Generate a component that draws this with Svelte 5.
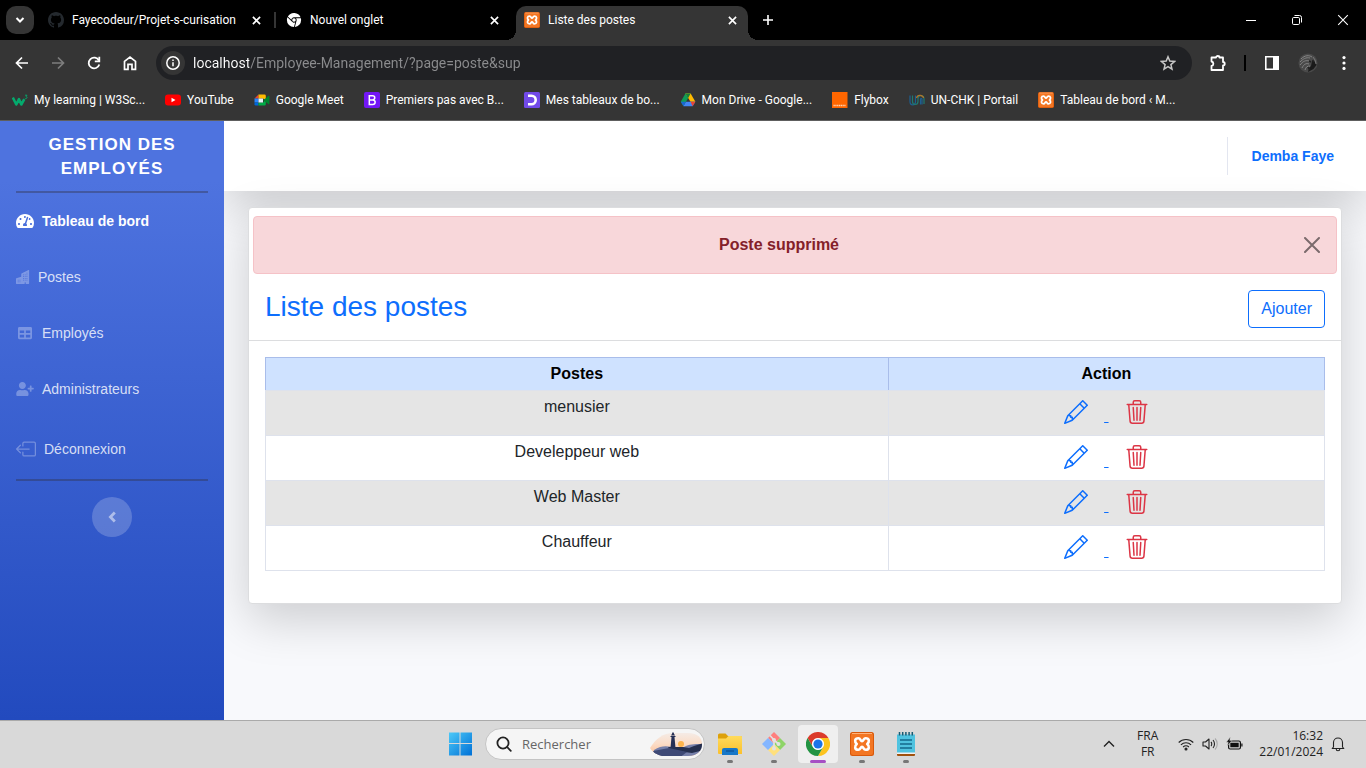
<script>
  const bookmarks = [
    { icon: 'w3', label: 'My learning | W3Sc...' },
    { icon: 'youtube', label: 'YouTube' },
    { icon: 'meet', label: 'Google Meet' },
    { icon: 'bootstrap', label: 'Premiers pas avec B...' },
    { icon: 'board', label: 'Mes tableaux de bo...' },
    { icon: 'drive', label: 'Mon Drive - Google...' },
    { icon: 'orange', label: 'Flybox' },
    { icon: 'un', label: 'UN-CHK | Portail' },
    { icon: 'xampp', label: 'Tableau de bord ‹ M...' }
  ];
  const tabs = [
    { icon: 'github', label: 'Fayecodeur/Projet-s-curisation', active: false },
    { icon: 'chromeMono', label: 'Nouvel onglet', active: false },
    { icon: 'xampp', label: 'Liste des postes', active: true }
  ];
  const nav = [
    { icon: 'gauge', label: 'Tableau de bord', active: true },
    { icon: 'buildings', label: 'Postes' },
    { icon: 'table', label: 'Employés' },
    { icon: 'userPlus', label: 'Administrateurs' },
    { icon: 'logout', label: 'Déconnexion', large: true }
  ];
  const apps = [
    { icon: 'folder', label: 'Explorateur de fichiers' },
    { icon: 'git', label: 'Git' },
    { icon: 'chrome', label: 'Google Chrome', active: true },
    { icon: 'xampp', label: 'XAMPP' },
    { icon: 'notepad', label: 'Bloc-notes' }
  ];
  const postes = ['menusier', 'Develeppeur web', 'Web Master', 'Chauffeur'];
  let url = $state('localhost/Employee-Management/?page=poste&sup');
  let query = $state('');
</script>

{#snippet icon(name, w, h = w)}
  {#if name === 'github'}
    <svg width={w} height={h} viewBox="0 0 16 16" fill="#24292e"><path d="M8 0C3.58 0 0 3.58 0 8c0 3.54 2.29 6.53 5.47 7.59.4.07.55-.17.55-.38 0-.19-.01-.82-.01-1.49-2.01.37-2.53-.49-2.69-.94-.09-.23-.48-.94-.82-1.13-.28-.15-.68-.52-.01-.53.63-.01 1.08.58 1.23.82.72 1.21 1.87.87 2.33.66.07-.52.28-.87.51-1.07-1.78-.2-3.64-.89-3.64-3.95 0-.87.31-1.59.82-2.15-.08-.2-.36-1.02.08-2.12 0 0 .67-.21 2.2.82.64-.18 1.32-.27 2-.27.68 0 1.36.09 2 .27 1.53-1.04 2.2-.82 2.2-.82.44 1.1.16 1.92.08 2.12.51.56.82 1.27.82 2.15 0 3.07-1.87 3.75-3.65 3.95.29.25.54.73.54 1.48 0 1.07-.01 1.93-.01 2.2 0 .21.15.46.55.38A8.013 8.013 0 0 0 16 8c0-4.42-3.58-8-8-8z" /></svg>
  {:else if name === 'chromeMono'}
    <svg width={w} height={h} viewBox="-1 -1 18 18" fill="#fff"><path d="M16 8a8 8 0 0 1-7.022 7.94l1.902-7.098a2.995 2.995 0 0 0 .05-1.492A2.977 2.977 0 0 0 10.237 6h5.511A8 8 0 0 1 16 8ZM0 8a8 8 0 0 0 7.927 8l1.426-5.321a2.978 2.978 0 0 1-.723.255 2.979 2.979 0 0 1-1.743-.147 2.986 2.986 0 0 1-1.043-.7L.633 4.876A7.975 7.975 0 0 0 0 8Zm5.004-.167L1.108 3.936A8.003 8.003 0 0 1 15.418 5H8.066a2.979 2.979 0 0 0-1.252.243 2.987 2.987 0 0 0-1.81 2.59ZM8 10a2 2 0 1 0 0-4 2 2 0 0 0 0 4Z" /></svg>
  {:else if name === 'xampp'}
    <svg width={w} height={h} viewBox="0 0 24 24"><rect width="24" height="24" rx="2.500" fill="#d9590b" /><rect x="1" y="1" width="22" height="22" rx="2" fill="#f37623" /><path d="M2 1.500h20" stroke="#ffb27a" stroke-width="1" /><path d="M8.400 6.200C4.500 6.200 4.300 10 6.800 12c-2.500 2-2.300 5.800 1.600 5.800 2.200 0 2-2.900 3.600-2.900s1.400 2.900 3.600 2.900c3.900 0 4.100-3.800 1.600-5.800 2.500-2 2.300-5.800-1.600-5.800-2.200 0-2 2.900-3.600 2.900S10.600 6.200 8.400 6.200z" fill="none" stroke="#fff" stroke-width="2.600" stroke-linejoin="round" /></svg>
  {:else if name === 'w3'}
    <svg width={w} height={h} viewBox="0 0 16 16" fill="none"><path d="M.8 5.500 4.300 12.500l2.700-5.300 2.300 5.300 3-5.300" stroke="#04aa6d" stroke-width="2.600" stroke-linejoin="round" /><path d="M13 3.200h2l-1 1.400c1.400 0 1.400 2-.2 2-.5 0-.8-.2-1-.5" stroke="#04aa6d" stroke-width=".9" /></svg>
  {:else if name === 'youtube'}
    <svg width={w} height={h} viewBox="0 0 16 16"><rect y="2.500" width="16" height="11" rx="3" fill="#f00" /><path d="m6.500 5.700 4 2.300-4 2.300z" fill="#fff" /></svg>
  {:else if name === 'meet'}
    <svg width={w} height={h} viewBox="0 0 16 16"><path d="M4.500 2.500v4h-4z" fill="#ea4335" /><path d="M.5 6.500h4v4h-4z" fill="#2684fc" /><path d="M.5 10.500h4v3H1.800A1.300 1.300 0 0 1 .5 12.200z" fill="#0066da" /><path d="M4.500 2.500h6A1.300 1.300 0 0 1 11.800 3.800V8L9 6.500H4.500z" fill="#ffba00" /><path d="M4.500 10.500H9L11.800 8v4.200a1.300 1.300 0 0 1-1.300 1.300h-6z" fill="#00ac47" /><path d="M4.500 6.500H9v4H4.500z" fill="#e9f1fb" /><path d="M11.800 6.200 14.500 3.800c.4-.3.900-.1.900.5v7.400c0 .6-.5.8-.9.5l-2.700-2.300L9 8z" fill="#00832d" /></svg>
  {:else if name === 'bootstrap'}
    <svg width={w} height={h} viewBox="0 0 16 16"><rect width="16" height="16" rx="2" fill="#7317f5" /><path d="M5.300 3.700h3.200c3 0 3 4 0 4.200H5.300zM5.300 7.900h3.600c3.100.2 3 4.500-.2 4.500H5.300z" fill="none" stroke="#fff" stroke-width="1.500" /></svg>
  {:else if name === 'board'}
    <svg width={w} height={h} viewBox="0 0 16 16"><rect width="16" height="16" rx="1.500" fill="#724ae8" /><path d="M4 3.800h3.500a4.200 4.200 0 0 1 0 8.400H4" fill="none" stroke="#fff" stroke-width="2.600" /></svg>
  {:else if name === 'drive'}
    <svg width={w} height={h} viewBox="0 0 16 16"><path d="M5.400 1.500h5.200L8 6.200 3.400 14.300.8 9.700z" fill="#0f9d58" /><path d="M5.400 1.500h5.200l4.800 8.200h-4.900z" fill="#ffba00" /><path d="M5.400 1.500 8 6.200l2.600-4.700z" fill="#188038" /><path d="M3.400 14.300h9.200l2.700-4.600H5.900z" fill="#4285f4" /><path d="M12.600 14.300 10.500 9.700h4.900z" fill="#ea4335" /><path d="M3.400 14.300.8 9.700h5.100z" fill="#1967d2" /></svg>
  {:else if name === 'orange'}
    <svg width={w} height={h} viewBox="0 0 16 16"><path d="M0 0h15.500v16H0z" fill="#ff6600" /><path d="M1.500 13.500h12" stroke="#ffd2b0" stroke-width="1.600" stroke-dasharray="1.300 .5" /></svg>
  {:else if name === 'un'}
    <svg width={w} height={h} viewBox="0 0 16 16" fill="none" stroke-width="1.200"><path d="M1 3.500v6c0 4.500 5.500 4.500 5.500 0v-6" stroke="#1d5f92" /><path d="M3.500 3.500v6c0 4 5.500 4 5.500 0V7c0-4.500 6-4.500 6 0v5" stroke="#1f7a70" /><path d="M7.500 6c1-4 6.500-3 7 0" stroke="#b0762c" /><path d="M11.500 12.500V7.500c0-1.500 1.500-1.500 1.500 0v5" stroke="#1d5f92" /></svg>
  {:else if name === 'gauge'}
    <svg width={w} height={h} viewBox="0 0 576 512" fill="currentColor"><path d="M288 32C128.940 32 0 160.940 0 320c0 52.800 14.250 102.260 39.060 144.800 5.610 9.620 16.300 15.200 27.440 15.200h443c11.140 0 21.830-5.580 27.440-15.200C561.750 422.260 576 372.800 576 320c0-159.060-128.940-288-288-288zm0 64c14.710 0 26.580 10.130 30.320 23.650-1.110 2.260-2.640 4.230-3.450 6.670l-9.220 27.670c-5.130 3.490-10.970 6.010-17.640 6.010-17.670 0-32-14.330-32-32S270.330 96 288 96zM96 384c-17.670 0-32-14.330-32-32s14.330-32 32-32 32 14.330 32 32-14.330 32-32 32zm48-160c-17.670 0-32-14.330-32-32s14.330-32 32-32 32 14.330 32 32-14.330 32-32 32zm246.770-72.410l-61.330 184C343.130 347.330 352 364.540 352 384c0 11.720-3.380 22.550-8.880 32H232.880c-5.500-9.450-8.880-20.280-8.880-32 0-33.940 26.500-61.430 59.900-63.590l61.340-184.010c4.170-12.560 17.730-19.450 30.360-15.170 12.570 4.190 19.350 17.790 15.170 30.360zm14.660 57.200l15.520-46.550c3.470-1.290 7.130-2.230 11.050-2.230 17.670 0 32 14.330 32 32s-14.330 32-32 32c-11.380-.01-20.890-6.280-26.570-15.220zM480 384c-17.670 0-32-14.330-32-32s14.330-32 32-32 32 14.330 32 32-14.330 32-32 32z" /></svg>
  {:else if name === 'buildings'}
    <svg width={w} height={h} viewBox="0 0 16 16" fill="currentColor"><path d="M15 .5a.5.5 0 0 0-.724-.447l-8 4A.5.5 0 0 0 6 4.500v3.140L.342 9.526A.5.5 0 0 0 0 10v5.500a.5.5 0 0 0 .5.5h9a.5.5 0 0 0 .5-.5V14h1v1.500a.5.5 0 0 0 .5.5h3a.5.5 0 0 0 .5-.5V.5ZM2 11h1v1H2v-1Zm2 0h1v1H4v-1Zm-1 2v1H2v-1h1Zm1 0h1v1H4v-1Zm9-10v1h-1V3h1ZM8 5h1v1H8V5Zm1 2v1H8V7h1ZM8 9h1v1H8V9Zm2 0h1v1h-1V9Zm-1 2v1H8v-1h1Zm1 0h1v1h-1v-1Zm3-2v1h-1V9h1Zm-1 2h1v1h-1v-1Zm-2-4h1v1h-1V7Zm3 0v1h-1V7h1Zm-2-2v1h-1V5h1Zm1 0h1v1h-1V5Z" /></svg>
  {:else if name === 'table'}
    <svg width={w} height={h} viewBox="0 0 512 512" fill="currentColor"><path d="M464 32H48C21.490 32 0 53.490 0 80v352c0 26.510 21.490 48 48 48h416c26.510 0 48-21.490 48-48V80c0-26.510-21.490-48-48-48zM224 416H64v-96h160v96zm0-160H64v-96h160v96zm224 160H288v-96h160v96zm0-160H288v-96h160v96z" /></svg>
  {:else if name === 'userPlus'}
    <svg width={w} height={h} viewBox="0 0 640 512" fill="currentColor"><path d="M624 208h-64v-64c0-8.800-7.200-16-16-16h-32c-8.800 0-16 7.200-16 16v64h-64c-8.800 0-16 7.200-16 16v32c0 8.800 7.200 16 16 16h64v64c0 8.800 7.200 16 16 16h32c8.800 0 16-7.200 16-16v-64h64c8.800 0 16-7.200 16-16v-32c0-8.800-7.200-16-16-16zm-400 48c70.700 0 128-57.300 128-128S294.700 0 224 0 96 57.300 96 128s57.300 128 128 128zm89.600 32h-16.700c-22.200 10.200-46.900 16-72.900 16s-50.600-5.800-72.900-16h-16.700C60.200 288 0 348.200 0 422.400V464c0 26.500 21.500 48 48 48h352c26.500 0 48-21.500 48-48v-41.600c0-74.200-60.200-134.400-134.400-134.400z" /></svg>
  {:else if name === 'logout'}
    <svg width={w} height={h} viewBox="0 0 16 16" fill="currentColor"><path d="M6 12.500a.5.5 0 0 0 .5.5h8a.5.5 0 0 0 .5-.5v-9a.5.5 0 0 0-.5-.5h-8a.5.5 0 0 0-.5.5v2a.5.5 0 0 1-1 0v-2A1.500 1.500 0 0 1 6.500 2h8A1.500 1.500 0 0 1 16 3.500v9a1.500 1.500 0 0 1-1.500 1.500h-8A1.500 1.500 0 0 1 5 12.500v-2a.5.5 0 0 1 1 0v2z" /><path d="M.146 8.354a.5.5 0 0 1 0-.708l3-3a.5.5 0 1 1 .708.708L1.707 7.500H10.500a.5.5 0 0 1 0 1H1.707l2.147 2.146a.5.5 0 0 1-.708.708l-3-3z" /></svg>
  {:else if name === 'pencil'}
    <svg width={w} height={h} viewBox="0 0 16 16" fill="currentColor"><path d="M12.146.146a.5.5 0 0 1 .708 0l3 3a.5.5 0 0 1 0 .708l-10 10a.5.5 0 0 1-.168.110l-5 2a.5.5 0 0 1-.65-.65l2-5a.5.5 0 0 1 .110-.168l10-10zM11.207 2.500 13.500 4.793 14.793 3.500 12.500 1.207 11.207 2.500zm1.586 3L10.500 3.207 4 9.707V10h.5a.5.5 0 0 1 .5.5v.5h.5a.5.5 0 0 1 .5.5v.5h.293l6.500-6.500zm-9.761 5.175-.106.106-1.528 3.821 3.821-1.528.106-.106A.5.5 0 0 1 5 12.500V12h-.5a.5.5 0 0 1-.5-.5V11h-.5a.5.5 0 0 1-.468-.325z" /></svg>
  {:else if name === 'trash'}
    <svg width={w} height={h} viewBox="0 0 16 16" fill="currentColor"><path d="M6.500 1h3a.5.5 0 0 1 .5.5v1H6v-1a.5.5 0 0 1 .5-.5ZM11 2.500v-1A1.500 1.500 0 0 0 9.500 0h-3A1.500 1.500 0 0 0 5 1.500v1H2.506a.58.58 0 0 0-.01 0H1.500a.5.5 0 0 0 0 1h.538l.853 10.660A2 2 0 0 0 4.885 16h6.230a2 2 0 0 0 1.994-1.840l.853-10.660h.538a.5.5 0 0 0 0-1h-.995a.59.59 0 0 0-.01 0H11Zm1.958 1-.846 10.580a1 1 0 0 1-.997.920h-6.230a1 1 0 0 1-.997-.920L3.042 3.500h9.916Zm-7.487 1a.5.5 0 0 1 .528.470l.5 8.500a.5.5 0 0 1-.998.060L5 5.030a.5.5 0 0 1 .470-.530Zm5.058 0a.5.5 0 0 1 .470.530l-.5 8.500a.5.5 0 1 1-.998-.060l.5-8.500a.5.5 0 0 1 .528-.470ZM8 4.500a.5.5 0 0 1 .5.5v8.500a.5.5 0 0 1-1 0V5a.5.5 0 0 1 .5-.5Z" /></svg>
  {:else if name === 'folder'}
    <svg width={w} height={h} viewBox="0 0 24 24"><path d="M0 3a1.500 1.500 0 0 1 1.500-1.500h6L10 4h12.500A1.500 1.500 0 0 1 24 5.500V12H0z" fill="#dda10c" /><path d="M0 6.500h8L10.500 4H23a1 1 0 0 1 1 1v17H1a1 1 0 0 1-1-1z" fill="url(#folderFill)" /><path d="M4 23v-5a2 2 0 0 1 2-2h12a2 2 0 0 1 2 2v5z" fill="#1778c8" /><path d="M8 19h8" stroke="#0f579c" stroke-width="1.400" /><defs><linearGradient id="folderFill" x2="0" y2="1"><stop stop-color="#ffdb5c" /><stop offset="1" stop-color="#fbc02d" /></linearGradient></defs></svg>
  {:else if name === 'git'}
    <svg width={w} height={h} viewBox="0 0 24 24"><path d="m12 0 6 6-6 6-6-6z" fill="#ff7f7d" /><path d="m18 6 6 6-6 6-6-6z" fill="#8ed467" /><path d="m12 12 6 6-6 6-6-6z" fill="#ffe07c" /><path d="m6 6 6 6-6 6-6-6z" fill="#84b6ff" /><path d="m8 3.500 4 4.500v8M12 8l4.500 4" fill="none" stroke="#e2e2e2" stroke-width="1.700" /><g fill="#e2e2e2"><circle cx="12" cy="8" r="2" /><circle cx="12" cy="16.500" r="2" /><circle cx="16.500" cy="12" r="2" /></g></svg>
  {:else if name === 'chrome'}
    <svg width={w} height={h} viewBox="0 0 24 24"><path d="M1.600 6A12 12 0 0 1 22.400 6H12a6 6 0 0 0-5.200 9z" fill="#db3b2b" /><path d="M22.400 6A12 12 0 0 1 12 24l5.200-9A6 6 0 0 0 12 6z" fill="#fcc31e" /><path d="M1.600 6A12 12 0 0 0 12 24l5.200-9A6 6 0 0 1 6.800 15z" fill="#229342" /><circle cx="12" cy="12" r="5.800" fill="#fff" /><circle cx="12" cy="12" r="4.600" fill="#1a73e8" /></svg>
  {:else if name === 'notepad'}
    <svg width={w} height={h} viewBox="0 0 24 24"><path d="M3 21.500h18V23a1 1 0 0 1-1 1H4a1 1 0 0 1-1-1z" fill="#a0520f" /><path d="M3 20h18v2H3z" fill="#f2f2f2" /><path d="M3 2.500h18v18H3z" fill="#4fc3e0" /><path d="M6 8h12M6 12h12M6 16h12" stroke="#146a8c" stroke-width="1.500" /><path d="M5.500 0v3.500M8.700 0v3.500M11.900 0v3.500M15.100 0v3.500M18.300 0v3.500" stroke="#185a72" stroke-width="1.500" /></svg>
  {/if}
{/snippet}

{#snippet cross(size, width)}
  <svg width={size} height={size} viewBox="0 0 10 10" fill="none" stroke="currentColor" stroke-width={width}><path d="m1 1 8 8M9 1 1 9" /></svg>
{/snippet}

<div class="screen">
  <header class="browser">
    <div class="tabstrip">
      <button class="tab-search" aria-label="Rechercher dans les onglets"><svg width="12" height="12" viewBox="0 0 12 12" fill="none" stroke="#fff" stroke-width="2"><path d="m2.500 4 3.500 3.500L9.500 4" /></svg></button>
      <div class="tabs">
        {#each tabs as tab, i}
          <div class="tab" class:active={tab.active} class:divided={i === 0}>
            {@render icon(tab.icon, 16)}
            <span class="tab-title">{tab.label}</span>
            <button class="tab-close" aria-label="Fermer l'onglet">{@render cross(9, 1.8)}</button>
          </div>
        {/each}
      </div>
      <button class="new-tab" aria-label="Ouvrir un onglet"><svg width="12" height="12" viewBox="0 0 12 12" stroke="#fff" stroke-width="1.600"><path d="M6 1v10M1 6h10" /></svg></button>
      <div class="window-controls">
        <button aria-label="Réduire"><svg width="10" height="10" viewBox="0 0 10 10" stroke="#fff"><path d="M0 5.500h10" /></svg></button>
        <button aria-label="Restaurer"><svg width="10" height="10" viewBox="0 0 10 10" fill="none" stroke="#fff"><rect x=".5" y="2.500" width="7" height="7" rx="1.200" /><path d="M2.500.5H7.500A2 2 0 0 1 9.500 2.500v5" /></svg></button>
        <button aria-label="Fermer">{@render cross(12, 0.9)}</button>
      </div>
    </div>

    <div class="toolbar">
      <button aria-label="Retour"><svg width="16" height="16" viewBox="0 0 16 16" fill="none" stroke="#fff" stroke-width="1.700"><path d="M14 8H3M8 2.500 2.500 8 8 13.500" /></svg></button>
      <button aria-label="Avancer"><svg width="16" height="16" viewBox="0 0 16 16" fill="none" stroke="#7d7d7d" stroke-width="1.700"><path d="M2 8h11M8 2.500 13.500 8 8 13.500" /></svg></button>
      <button aria-label="Actualiser"><svg width="16" height="16" viewBox="0 0 16 16" fill="none" stroke="#fff" stroke-width="1.800"><path d="M12.900 5.500A5.400 5.400 0 1 0 13.300 9.500" /><path d="M13.300 1.800v4.500H8.800" /></svg></button>
      <button aria-label="Accueil"><svg width="16" height="16" viewBox="0 0 16 16" fill="none" stroke="#fff" stroke-width="1.700"><path d="M2.500 6.300 8 2l5.500 4.300v8H10v-5H6v5H2.500z" /></svg></button>
      <div class="omnibox">
        <span class="site-info"><svg width="16" height="16" viewBox="0 0 16 16" fill="none" stroke="#fff" stroke-width="1.500"><circle cx="8" cy="8" r="6.200" /><path d="M8 7.300v4M8 4.500v1.500" /></svg></span>
        <input aria-label="Adresse" bind:value={url} spellcheck="false" />
        <button class="star" aria-label="Ajouter aux favoris"><svg width="16" height="16" viewBox="0 0 16 16" fill="none" stroke="#c7c7c7" stroke-width="1.500"><path d="m8 1.800 1.800 4.300 4.700.4-3.600 3.100 1.100 4.600L8 11.700l-4 2.500 1.100-4.600L1.500 6.500l4.700-.4z" /></svg></button>
      </div>
      <button aria-label="Extensions"><svg width="18" height="18" viewBox="0 0 18 18" fill="none" stroke="#fff" stroke-width="1.800" stroke-linejoin="round"><path d="M2.500 3.500H7c0-2 3.500-2 3.500 0H14V8c2.300 0 2.300 3.500 0 3.500V16H2.500v-4c2.500-.5 2.500-4 0-4.500z" /></svg></button>
      <span class="tool-divider"></span>
      <button aria-label="Panneau latéral"><svg width="16" height="16" viewBox="0 0 16 16"><path d="M1.800 1.800h12.400v12.400H1.800z" fill="none" stroke="#fff" stroke-width="1.600" /><path d="M9 2h5.500v12H9z" fill="#fff" /></svg></button>
      <button aria-label="Profil"><svg width="20" height="20" viewBox="0 0 20 20"><circle cx="10" cy="10" r="9.500" fill="#4a4a4a" /><path d="M3 6c4-4 8-4 11-2M2 9c3-3 6-5 10-4M2 12c3-4 6-5 9-4M4 15c2-4 4-5 7-4M7 17c1-3 2-4 5-4" fill="none" stroke="#858585" /><path d="M14 8c3 0 4 1 4.500 4l-3 4-5.500 3 1-4 2-2z" fill="#1a1a1a" /><path d="m14.500 7 1.500 2M11 8l2 1M10 14l2 3" stroke="#222" stroke-width="1.500" /><path d="m15 4 2 3 1 4" stroke="#777" fill="none" /></svg></button>
      <button aria-label="Menu"><svg width="16" height="16" viewBox="0 0 16 16" fill="#fff"><circle cx="8" cy="2.600" r="1.600" /><circle cx="8" cy="8" r="1.600" /><circle cx="8" cy="13.400" r="1.600" /></svg></button>
    </div>

    <nav class="bookmarks" aria-label="Favoris">
      {#each bookmarks as mark}
        <a href="#top">{@render icon(mark.icon, 16)}<span>{mark.label}</span></a>
      {/each}
    </nav>
  </header>

  <div class="page">
    <aside class="sidebar">
      <a class="brand" href="#top">Gestion des employés</a>
      <hr />
      <ul>
        {#each nav as item}
          <li>
            <a href="#top" class:active={item.active} class:large={item.large}>
              {#if item.icon === 'gauge'}
                <span class="nav-icon">{@render icon(item.icon, 18, 16)}</span>
              {:else if item.icon === 'userPlus'}
                <span class="nav-icon">{@render icon(item.icon, 18, 14)}</span>
              {:else if item.icon === 'logout'}
                <span class="nav-icon">{@render icon(item.icon, 20)}</span>
              {:else if item.icon === 'buildings'}
                <span class="nav-icon small">{@render icon(item.icon, 14)}</span>
              {:else}
                <span class="nav-icon">{@render icon(item.icon, 14)}</span>
              {/if}
              <span>{item.label}</span>
            </a>
          </li>
        {/each}
      </ul>
      <hr />
      <button class="collapse" aria-label="Réduire le menu"><svg width="8" height="12" viewBox="0 0 8 12" fill="none" stroke="currentColor" stroke-width="2.800"><path d="M6.800 1.500 2.400 6l4.400 4.500" /></svg></button>
    </aside>

    <div class="content">
      <div class="topbar"><a class="user" href="#top">Demba Faye</a></div>
      <main class="card">
        <div class="alert" role="alert">
          <strong>Poste supprimé</strong>
          <button class="dismiss" aria-label="Fermer"><svg width="16" height="16" viewBox="0 0 16 16" stroke="#000" stroke-width="2" stroke-linecap="round"><path d="m1 1 14 14M15 1 1 15" /></svg></button>
        </div>
        <div class="card-header">
          <h1>Liste des postes</h1>
          <button class="add">Ajouter</button>
        </div>
        <div class="card-body">
          <table>
            <thead><tr><th class="name">Postes</th><th>Action</th></tr></thead>
            <tbody>
              {#each postes as poste}
                <tr>
                  <td>{poste}</td>
                  <td>
                    <div class="actions">
                      <a class="edit" href="#top" aria-label="Modifier {poste}">{@render icon('pencil', 24)}<span>&nbsp;</span></a>
                      <a class="delete" href="#top" aria-label="Supprimer {poste}">{@render icon('trash', 24)}</a>
                    </div>
                  </td>
                </tr>
              {/each}
            </tbody>
          </table>
        </div>
      </main>
    </div>
  </div>

  <footer class="taskbar">
    <div class="dock">
      <button class="app" aria-label="Démarrer"><svg width="24" height="24" viewBox="0 0 24 24"><defs><linearGradient id="win" x2="1" y2="1"><stop stop-color="#4cc9f8" /><stop offset="1" stop-color="#0070d6" /></linearGradient></defs><path d="M1 .5h10.500V11H1zM12.500.5H24V11H12.500zM1 12h10.500v11.500H1zM12.500 12H24v11.500H12.500z" fill="url(#win)" /></svg></button>
      <div class="search">
        <svg width="16" height="16" viewBox="0 0 16 16" fill="none" stroke="#222" stroke-width="1.800" stroke-linecap="round"><circle cx="7" cy="7" r="5.600" /><path d="m11.200 11.200 3.600 3.600" /></svg>
        <input aria-label="Rechercher" placeholder="Rechercher" bind:value={query} />
        <svg width="54" height="28" viewBox="0 0 54 28"><defs><linearGradient id="sky" x2="0" y2="1"><stop stop-color="#f3efee" /><stop offset=".5" stop-color="#fbdcc6" /><stop offset="1" stop-color="#fbb98b" /></linearGradient><clipPath id="pill"><path d="M0 18C6 9 12 3 24 3h14c10 0 14 5 14 11s-4 12-14 12H12C8 25 3 23 0 18z" /></clipPath></defs><g clip-path="url(#pill)"><path d="M0 0h54v28H0z" fill="url(#sky)" /><circle cx="31" cy="14" r="3" fill="#fcb34c" /><path d="M4 20c8-5 14-4 22-2l8-1c6-3 10-3 20-3v15H4z" fill="#7680aa" /><path d="M18 17h15l6 1 5-2 10-3v7l-12 3-22-3z" fill="#252f4e" /><path d="m3 21 16-3 18 4-8 6H6z" fill="#3f4a76" /></g><path d="M21.500 7h3l1 11h-5z" fill="#252f55" /><path d="M20.500 6.500h5M22 5l1-2 1 2z" stroke="#252f55" stroke-width="1.200" fill="#252f55" /></svg>
      </div>
      {#each apps as app}
        <button class="app running" class:focused={app.active} aria-label={app.label}>{@render icon(app.icon, 24)}</button>
      {/each}
    </div>
    <div class="tray">
      <svg width="12" height="8" viewBox="0 0 12 8" fill="none" stroke="#222" stroke-width="1.400"><path d="m1 6.500 5-5 5 5" /></svg>
      <div class="lang">FRA<br />FR</div>
      <div class="status">
        <svg width="16" height="14" viewBox="0 0 16 14" fill="none" stroke="#222" stroke-width="1.100"><path d="M.7 5.500a10.300 10.300 0 0 1 14.600 0M2.900 7.800a7.200 7.200 0 0 1 10.200 0M5.100 10a4.200 4.200 0 0 1 5.800 0" /><circle cx="8" cy="12" r="1" fill="#222" /></svg>
        <svg width="16" height="14" viewBox="0 0 16 14" fill="none" stroke="#222" stroke-width="1.100" stroke-linejoin="round"><path d="M1 5h2.500L7 2v10L3.500 9H1zM9 5c1 1 1 3 0 4M11 3c2 2.200 2 5.800 0 8" /><path d="M13 1.500c3 3 3 8 0 11" stroke="#aaa" /></svg>
        <svg width="17" height="14" viewBox="0 0 17 14"><rect x="2.600" y="4" width="11.800" height="8" rx="1.500" fill="none" stroke="#111" stroke-width="1.200" /><path d="M4.300 5.700h8.400v4.600H4.300zM15.300 6.500h1.200v3h-1.200z" fill="#111" /><path d="M4.300 0 .3 5.200h2L1.200 9l4.800-5.500H3.800z" fill="#111" stroke="#d9d9d9" stroke-width=".5" /></svg>
      </div>
      <time>16:32<br />22/01/2024</time>
      <svg width="14" height="16" viewBox="0 0 14 16" fill="none" stroke="#222" stroke-width="1.100" stroke-linejoin="round"><path d="M2.500 11V6.500a4.500 4.500 0 0 1 9 0V11l1.300 1.500H1.200zM5.200 13a1.800 1.800 0 0 0 3.600 0" /></svg>
    </div>
  </footer>
</div>

<style>
  :global(body) { margin: 0; }
  * { box-sizing: border-box; }
  .screen { display: flex; flex-direction: column; min-height: 100vh; font-family: "Liberation Sans", Arial, sans-serif; font-size: 16px; line-height: 24px; color: #212529; }
  button { border: 0; padding: 0; background: none; color: inherit; font: inherit; display: flex; align-items: center; justify-content: center; cursor: pointer; }
  svg { display: block; flex-shrink: 0; }
  a { text-decoration: none; color: inherit; }
  input { border: 0; outline: 0; padding: 0; min-width: 0; background: none; font: inherit; color: inherit; }

  .browser { background: #353535; color: #fff; font: 12px/16px Roboto, "Noto Sans", sans-serif; border-bottom: 1px solid #5e5e5e; }
  .tabstrip { display: flex; height: 40px; background: #000; padding-left: 6px; }
  .tab-search { width: 28px; height: 28px; margin-top: 6px; border-radius: 10px; background: #353535; }
  .tabs { display: flex; gap: 6px; padding: 6px 0 0 6px; }
  .tab { position: relative; display: flex; align-items: center; gap: 8px; width: 232px; padding: 0 10px 6px 8px; border-radius: 10px 10px 0 0; }
  .tab.active { background: #353535; }
  .tab.active::before, .tab.active::after { content: ""; position: absolute; bottom: 0; width: 10px; height: 10px; }
  .tab.active::before { left: -10px; background: radial-gradient(circle at 0 0, #000 10px, #353535 10px); }
  .tab.active::after { right: -10px; background: radial-gradient(circle at 100% 0, #000 10px, #353535 10px); }
  .tab.divided::after { content: ""; position: absolute; right: -4px; top: 6px; width: 2px; height: 16px; background: #353535; }
  .tab-title { flex: 1; white-space: nowrap; }
  .tab-close { width: 12px; height: 16px; }
  .new-tab { width: 28px; margin-left: 6px; }
  .window-controls { display: flex; margin-left: auto; }
  .window-controls button { width: 46px; }

  .toolbar { display: flex; align-items: center; height: 46px; padding: 0 4px; }
  .toolbar > button { width: 36px; height: 34px; }
  .omnibox { flex: 1; display: flex; align-items: center; gap: 8px; height: 34px; margin: 0 8px; padding: 0 16px 0 5px; border-radius: 17px; background: #202124; }
  .site-info { display: flex; align-items: center; justify-content: center; width: 24px; height: 24px; border-radius: 50%; background: #353535; }
  .omnibox input { flex: 1; font-size: 14px; line-height: 20px; color: transparent; caret-color: #fff; background: linear-gradient(90deg, #fff 56px, #8b8c8e 56px); background-clip: text; -webkit-background-clip: text; }
  .tool-divider { width: 2px; height: 16px; margin: 0 8px; background: #000; }
  .bookmarks { display: flex; gap: 20px; height: 34px; padding: 0 12px 6px; align-items: center; white-space: nowrap; }
  .bookmarks a { display: flex; align-items: center; gap: 6px; }

  .page { flex: 1; display: flex; background: #f8f9fc; overflow: hidden; }
  .sidebar { position: relative; z-index: 1; width: 224px; flex-shrink: 0; color: #fff; background: linear-gradient(180deg, #4e73df 10%, #224abe 100%); }
  .brand { display: block; height: 70px; padding: 12px 16px; text-align: center; text-transform: uppercase; font-size: 17px; font-weight: 800; letter-spacing: 1px; }
  .sidebar hr { height: 2px; margin: 0 16px; border: 0; background: rgba(50, 50, 70, 0.4); }
  .sidebar ul { list-style: none; margin: 0; padding: 0; }
  .sidebar li a { display: flex; align-items: center; gap: 8px; height: 56px; padding: 0 16px; font-size: 14px; color: rgba(255, 255, 255, 0.8); }
  .sidebar li a.active { color: #fff; font-weight: 700; }
  .sidebar li a.large { height: 62px; padding-top: 2px; }
  .nav-icon { display: flex; justify-content: center; min-width: 18px; color: rgba(255, 255, 255, 0.3); }
  .nav-icon.small { min-width: 14px; }
  .active .nav-icon { color: #fff; }
  .collapse { width: 40px; height: 40px; margin: 16px auto; border-radius: 50%; background: rgba(255, 255, 255, 0.2); color: rgba(255, 255, 255, 0.5); }

  .content { flex: 1; min-width: 0; }
  .topbar { display: flex; align-items: center; justify-content: flex-end; height: 70px; margin-bottom: 16px; padding-right: 32px; background: #fff; box-shadow: 0 16px 48px rgba(0, 0, 0, 0.175); }
  .user { padding: 7px 0 7px 24px; border-left: 1px solid #e3e6f0; font-size: 14px; font-weight: 700; color: #0d6efd; }
  .card { position: relative; margin: 0 24px 24px; border: 1px solid #dcdddf; border-radius: 4px; background: #fff; box-shadow: 0 16px 48px rgba(0, 0, 0, 0.175); }
  .alert { display: flex; align-items: center; gap: 16px; margin: 8px 4px 0; padding: 16px; border: 1px solid #f5c2c7; border-radius: 4px; background: #f8d7da; color: #842029; }
  .alert strong { flex: 1; text-align: center; }
  .dismiss { opacity: 0.5; }
  .card-header { display: flex; justify-content: space-between; align-items: flex-start; padding: 16px 16px 12px; border-bottom: 1px solid #dcdddf; }
  h1 { margin: 0; font-size: 28px; font-weight: 400; line-height: 34px; color: #0d6efd; }
  .add { height: 38px; padding: 0 12px; border: 1px solid #0d6efd; border-radius: 4px; color: #0d6efd; }
  .card-body { padding: 16px 16px 32px; }
  table { width: 100%; border-collapse: collapse; text-align: center; }
  th, td { padding: 4px; border: 1px solid #dee2ec; vertical-align: top; }
  th { background: #cfe2ff; color: #000; border-color: #a9bdea; border-bottom-color: #dee2ec; }
  .name { width: 58.8%; }
  tbody tr:nth-child(odd) { background: #e5e5e5; }
  .actions { display: flex; justify-content: center; align-items: center; gap: 16px; height: 36px; padding-bottom: 2px; }
  .edit { display: flex; gap: 16px; align-items: flex-end; color: #0d6efd; }
  .edit span { text-decoration: underline; line-height: 16px; }
  .delete { color: #dc3545; }

  .taskbar { display: grid; grid-template-columns: 1fr auto 1fr; align-items: center; height: 48px; padding-bottom: 1px; border-top: 1px solid #aaa; background: #d9d9d9; color: #222; font: 12px/16px "Open Sans", "Noto Sans", sans-serif; }
  .dock { grid-column: 2; display: flex; align-items: center; }
  .app { position: relative; width: 40px; height: 38px; margin: 0 2px; border-radius: 4px; }
  .app.focused { background: #efefef; }
  .app.running::after { content: ""; position: absolute; bottom: 0; left: 17px; width: 6px; height: 3px; border-radius: 2px; background: #777; }
  .app.focused::after { left: 12px; width: 16px; background: #a64fc4; }
  .search { display: flex; align-items: center; gap: 10px; width: 220px; height: 32px; margin: 0 3px; padding-left: 10px; border: 1px solid #c4c4c4; border-radius: 16px; background: #f5f5f5; overflow: hidden; }
  .search input { flex: 1; width: 0; font-size: 13px; }
  .search input::placeholder { color: #666; opacity: 1; }
  .tray { display: flex; align-items: center; justify-content: flex-end; padding-right: 21px; }
  .lang { margin: 0 20px 0 22px; text-align: center; }
  .status { display: flex; gap: 8px; align-items: center; margin-right: 16px; }
  time { margin-right: 8px; text-align: right; }
</style>
